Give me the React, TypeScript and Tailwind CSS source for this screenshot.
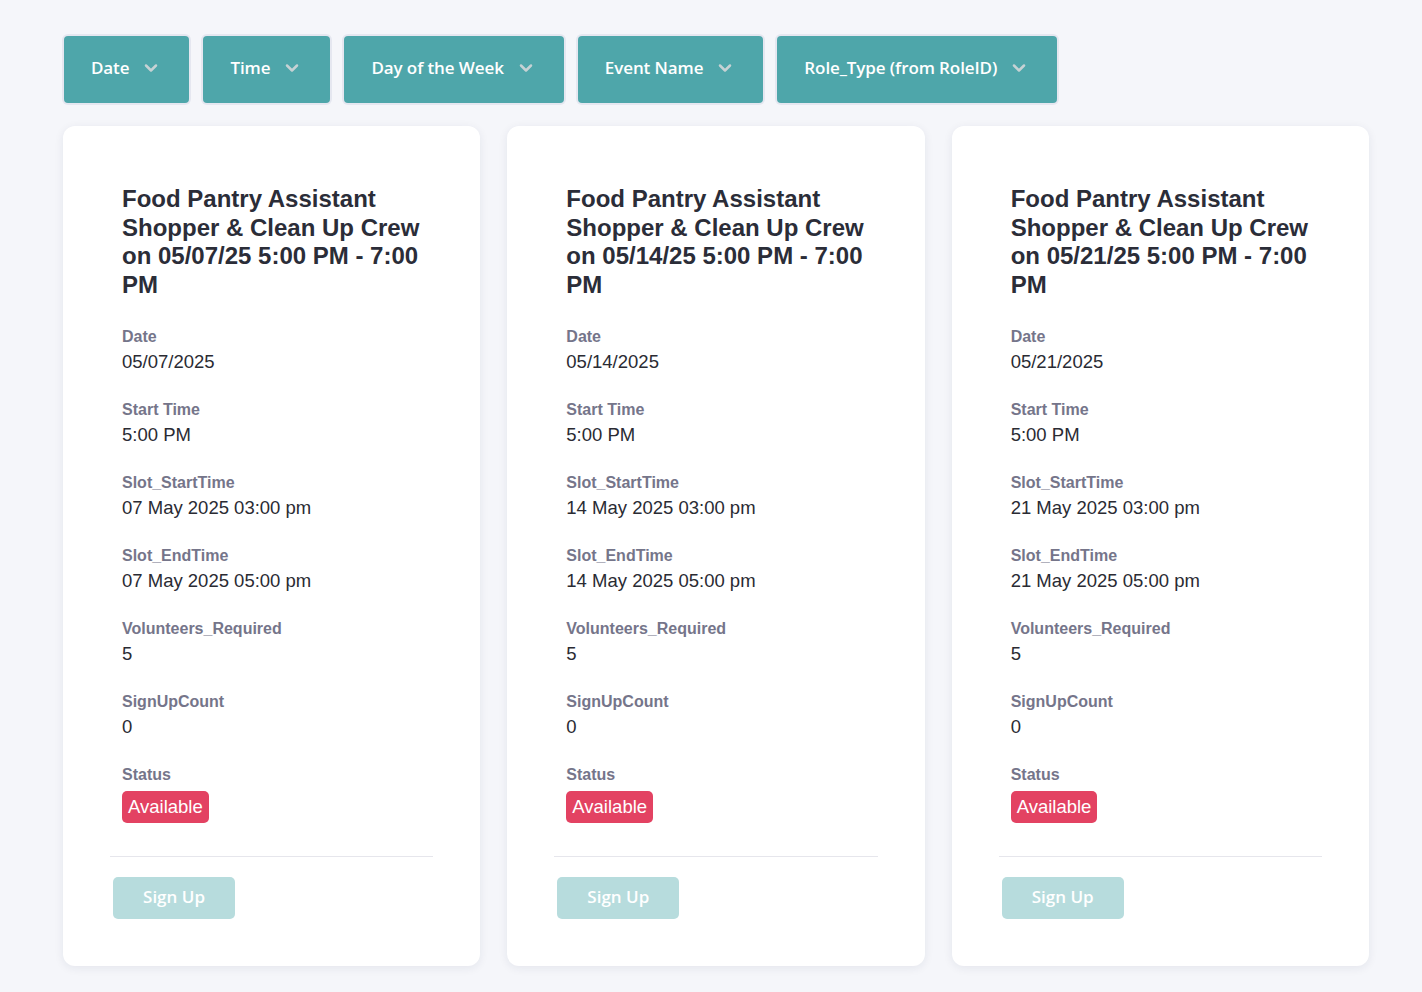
import { ChevronDown } from "lucide-react";

const filters = ["Date", "Time", "Day of the Week", "Event Name", "Role_Type (from RoleID)"];

const slots = [
  { short: "05/07/25", date: "05/07/2025", day: "07" },
  { short: "05/14/25", date: "05/14/2025", day: "14" },
  { short: "05/21/25", date: "05/21/2025", day: "21" },
];

function Field({ label, value }: { label: string; value: string }) {
  return (
    <div className="mb-[26px]">
      <div className="text-[16px] leading-5 font-bold text-[#75758a]">{label}</div>
      <div className="mt-[3px] text-[18.5px] leading-6 text-[#2a2b33]">{value}</div>
    </div>
  );
}

function SlotCard({ slot }: { slot: (typeof slots)[number] }) {
  return (
    <div className="bg-white rounded-xl shadow-[0_2px_10px_rgba(30,40,80,0.08)] px-[47px] pt-[59px] pb-[47px]">
      <div className="px-[12px]">
        <h2 className="-mr-[24px] text-[24px] leading-[28.5px] font-bold text-[#2b2d38]">
          Food Pantry Assistant Shopper &amp; Clean Up Crew on {slot.short} 5:00 PM - 7:00 PM
        </h2>
        <div className="mt-[28px]">
          <Field label="Date" value={slot.date} />
          <Field label="Start Time" value="5:00 PM" />
          <Field label="Slot_StartTime" value={`${slot.day} May 2025 03:00 pm`} />
          <Field label="Slot_EndTime" value={`${slot.day} May 2025 05:00 pm`} />
          <Field label="Volunteers_Required" value="5" />
          <Field label="SignUpCount" value="0" />
          <div>
            <div className="text-[16px] leading-5 font-bold text-[#75758a]">Status</div>
            <span className="mt-[6px] inline-block bg-[#e34262] text-white text-[18.5px] leading-8 px-[6px] rounded-[5px]">
              Available
            </span>
          </div>
        </div>
      </div>
      <div className="mt-[33px] border-t border-[#e6e6ec]" />
      <button className="ml-[3px] mt-[20px] h-[42px] w-[122px] rounded-[5px] bg-[#b7dcdd] text-white text-[17px] font-semibold font-['Open_Sans',sans-serif] pb-[2px]">
        Sign Up
      </button>
    </div>
  );
}

export default function App() {
  return (
    <div className="min-h-[992px] bg-[#f5f6fa] font-['Liberation_Sans',Arial,sans-serif] pl-[63px] pr-[53px] pt-[36px] pb-[26px]">
      <div className="flex gap-[14px] ml-px">
        {filters.map((f) => (
          <button
            key={f}
            className="h-[67px] flex items-center gap-[12px] pl-[27px] pr-[28px] pb-[3px] rounded-[4px] bg-[#4ea6aa] text-white text-[17px] font-semibold tracking-[-0.1px] font-['Open_Sans',sans-serif] shadow-[0_0_0_2px_rgba(225,228,238,0.8)]"
          >
            {f}
            <ChevronDown className="w-[20px] h-[20px] text-[#c6d2d4]" strokeWidth={3} />
          </button>
        ))}
      </div>
      <div className="mt-[23px] grid grid-cols-3 gap-[27px]">
        {slots.map((s) => (
          <SlotCard key={s.date} slot={s} />
        ))}
      </div>
    </div>
  );
}
